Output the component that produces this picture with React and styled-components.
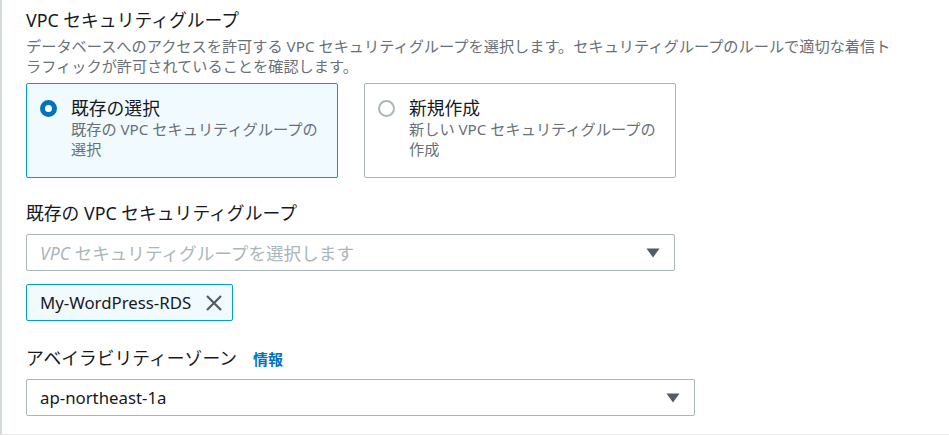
import React from 'react';
import styled, { createGlobalStyle } from 'styled-components';

const GlobalStyle = createGlobalStyle`
  html, body {
    margin: 0;
    padding: 0;
    background: #ffffff;
  }
  body {
    font-family: "Noto Sans", "Noto Sans CJK JP", sans-serif;
    color: #16191f;
  }
`;

const Panel = styled.div`
  width: 949px;
  box-sizing: border-box;
  border-left: 2px solid #d5dbdb;
  border-bottom: 1px solid #eaeded;
  padding: 8px 24px 18px 24px;
  display: flex;
  flex-direction: column;
`;

const Title = styled.div`
  font-size: 17.8px;
  line-height: 24px;
`;

const Description = styled.div`
  margin-top: 4px;
  max-width: 872px;
  font-size: 15.2px;
  line-height: 20px;
  color: #687078;
`;

const Tiles = styled.div`
  display: flex;
  gap: 26px;
  margin-top: 7px;
`;

const Tile = styled.div`
  width: 312px;
  box-sizing: border-box;
  padding: 13px 12px 18px 13px;
  display: flex;
  gap: 14px;
  border: 1px solid ${(p) => (p.selected ? '#00a1c9' : '#aab7b8')};
  border-radius: 2px;
  background: ${(p) => (p.selected ? '#f1faff' : '#ffffff')};
`;

const Radio = styled.span`
  flex: none;
  width: 17px;
  height: 17px;
  margin-top: 3px;
  box-sizing: border-box;
  border-radius: 50%;
  border: ${(p) => (p.checked ? '5px solid #0073bb' : '2px solid #aab7b8')};
  background: #ffffff;
`;

const TileText = styled.div`
  display: flex;
  flex-direction: column;
`;

const TileTitle = styled.div`
  font-size: 17.8px;
  line-height: 22px;
`;

const TileSub = styled.div`
  font-size: 15.2px;
  line-height: 20px;
  color: #687078;
`;

const Label = styled.div`
  display: flex;
  align-items: baseline;
  gap: 16px;
  margin-top: ${(p) => p.gap}px;
  font-size: 17.8px;
  line-height: 22px;
`;

const InfoLink = styled.a`
  font-size: 15px;
  font-weight: 700;
  color: #0073bb;
  text-decoration: none;
`;

const Select = styled.div`
  width: ${(p) => p.width}px;
  height: 37px;
  box-sizing: border-box;
  margin-top: ${(p) => p.gap}px;
  padding: 0 14px 0 13px;
  display: flex;
  align-items: center;
  justify-content: space-between;
  border: 1px solid #aab7b8;
  border-radius: 2px;
  background: #ffffff;
  font-size: ${(p) => (p.placeholder ? 17.6 : 16.8)}px;
  color: ${(p) => (p.placeholder ? '#aab7b8' : '#16191f')};
`;

const Em = styled.i`
  font-style: italic;
`;

const Token = styled.div`
  align-self: flex-start;
  margin-top: 13px;
  height: 37px;
  box-sizing: border-box;
  padding: 0 9px 0 13px;
  display: flex;
  align-items: center;
  gap: 14px;
  border: 1px solid #00a1c9;
  border-radius: 2px;
  background: #f1faff;
  font-size: 16.8px;
`;

const Caret = () => (
  <svg width="14" height="10" viewBox="0 0 14 10">
    <polygon points="0.5,0.5 13.5,0.5 7,9.5" fill="#545b64" />
  </svg>
);

const Close = () => (
  <svg width="18" height="18" viewBox="0 0 18 18">
    <path d="M2 2 L16 16 M16 2 L2 16" stroke="#545b64" strokeWidth="2.2" />
  </svg>
);

export default function App() {
  return (
    <>
      <GlobalStyle />
      <Panel>
        <Title>VPC セキュリティグループ</Title>
        <Description>
          データベースへのアクセスを許可する VPC セキュリティグループを選択します。セキュリティグループのルールで適切な着信トラフィックが許可されていることを確認します。
        </Description>
        <Tiles>
          <Tile selected>
            <Radio checked />
            <TileText>
              <TileTitle>既存の選択</TileTitle>
              <TileSub>既存の VPC セキュリティグループの選択</TileSub>
            </TileText>
          </Tile>
          <Tile>
            <Radio />
            <TileText>
              <TileTitle>新規作成</TileTitle>
              <TileSub>新しい VPC セキュリティグループの作成</TileSub>
            </TileText>
          </Tile>
        </Tiles>
        <Label gap={24}>既存の VPC セキュリティグループ</Label>
        <Select width={649} gap={10} placeholder>
          <span>
            <Em>VPC</Em> セキュリティグループを選択します
          </span>
          <Caret />
        </Select>
        <Token>
          My-WordPress-RDS
          <Close />
        </Token>
        <Label gap={26}>
          アベイラビリティーゾーン
          <InfoLink href="#">情報</InfoLink>
        </Label>
        <Select width={669} gap={9}>
          <span>ap-northeast-1a</span>
          <Caret />
        </Select>
      </Panel>
    </>
  );
}
